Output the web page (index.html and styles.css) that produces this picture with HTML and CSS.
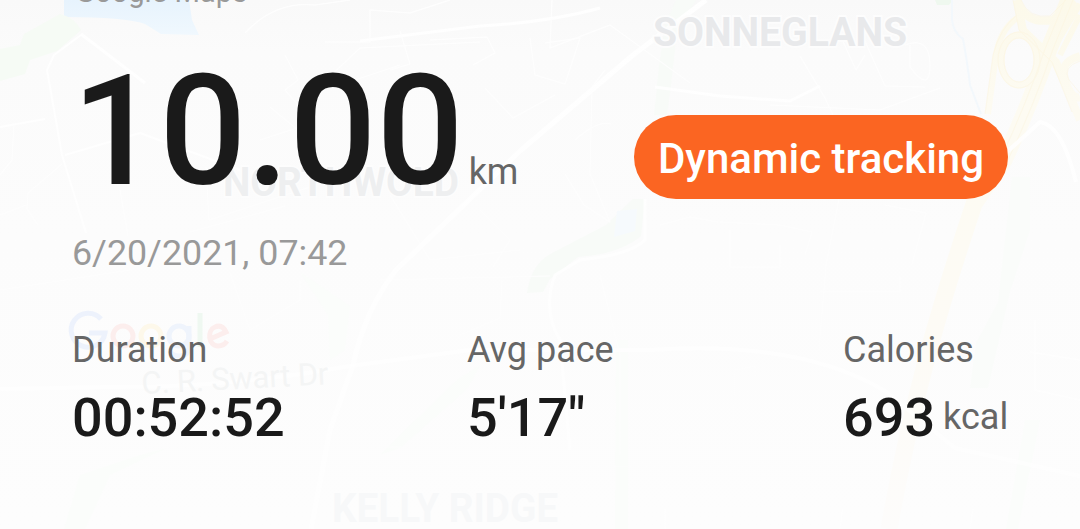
FILE: index.html
```html
<!DOCTYPE html>
<html lang="en">
<head>
<meta charset="utf-8">
<title>Workout</title>
<link rel="stylesheet" href="styles.css">
</head>
<body>
<div class="screen">
  <svg class="map" viewBox="0 0 1080 529" aria-hidden="true">
    <defs>
      <linearGradient id="fade" x1="0" y1="0" x2="0" y2="1">
        <stop offset="0" stop-color="#f9f9f9"/><stop offset=".1" stop-color="#fbfbfb"/>
        <stop offset=".45" stop-color="#fcfcfc"/><stop offset="1" stop-color="#fdfdfd"/>
      </linearGradient>
      <linearGradient id="water" x1="0" y1="0" x2="0" y2="1">
        <stop offset="0" stop-color="#e7f3fd"/><stop offset="1" stop-color="#f0f8fe"/>
      </linearGradient>
      <linearGradient id="motorway" gradientUnits="userSpaceOnUse" x1="0" y1="0" x2="0" y2="529">
        <stop offset="0" stop-color="#fcf9ea"/><stop offset=".2" stop-color="#fdfbf2"/><stop offset=".6" stop-color="#fdfbf5"/><stop offset="1" stop-color="#fdfcfb"/>
      </linearGradient>
      <linearGradient id="road" gradientUnits="userSpaceOnUse" x1="0" y1="0" x2="0" y2="529">
        <stop offset="0" stop-color="#fff" stop-opacity=".95"/><stop offset=".5" stop-color="#fff" stop-opacity=".8"/><stop offset="1" stop-color="#fff" stop-opacity=".5"/>
      </linearGradient>
    </defs>
    <rect width="1080" height="529" fill="url(#fade)"/>
    <path d="M64 0H189L192 20L199 35L161 34L145 24Q125 17 64 17Z" fill="url(#water)"/>
    <path d="M0 49L20 45L24 34L60 14Q74 17 81 30L57 51L30 60L25 74L0 81Z" fill="#f6fbf5"/>
    <g fill="#f8fbf8">
      <path d="M676 0H696L677 32L671 85L667 115H654L659 66L665 25Z"/>
      <path d="M633 199L645 199L641 236Q620 254 578 257L550 279L543 292L527 293Q531 263 554 252L606 225Z"/>
      <path d="M1012 177H1030V230L1010 292L988 388H970L976 343L998 302Z" fill="#fafcfa"/>
      <path d="M935 0H953L949 5H937Z" fill="#eff8ef"/>
    </g>
    <g fill="#fbfdfb">
      <path d="M300 272L350 306L345 350L330 360L328 315Z"/>
      <path d="M80 475L140 455L167 448L110 475L85 529H64Z"/>
      <path d="M457 380L480 365L468 388L400 448L380 455Z"/>
      <path d="M616 340H628V529H615ZM1025 420H1040L1018 529H1006Z"/>
    </g>
    <path d="M617 211L637 209L635 231L614 237Z" fill="#f6fafd"/>
    <path d="M952 0V20Q953 32 963 39Q967 60 970 85L981 114" fill="none" stroke="#f3f8fc" stroke-width="2"/>
    <g fill="none" stroke="url(#motorway)">
      <path d="M1069 0L1049 49Q1030 105 1004 160L974 204Q942 300 925 365Q905 440 889 529" stroke-width="17"/>
      <path d="M1017 0Q1025 25 1053 20L1074 0M1017 0L1023 30L1056 62L1080 120M1080 56Q1058 62 1065 81T1080 97" stroke-width="8"/>
      <ellipse cx="1019" cy="60" rx="18" ry="25" stroke-width="7"/>
      <path d="M1017 18Q1000 30 996 55L988 114" stroke-width="6"/>
      <path d="M1080 4L1050 54L1080 117M1080 15L1060 55" stroke-width="6"/>
    </g>
    <g fill="none" stroke="#fcf6df" stroke-width="1" opacity=".5">
      <path d="M1073 0L1053 49Q1034 105 1008 160M1065 0L1045 49Q1026 105 1000 160M1013 0L1019 30L1052 62L1072 112"/>
      <ellipse cx="1019" cy="60" rx="21" ry="28"/><ellipse cx="1019" cy="60" rx="15" ry="22"/>
      <path d="M1021 0Q1029 19 1050 16L1066 0M1080 61Q1062 67 1069 80L1080 93M1017 15Q1000 28 993 55L985 114"/>
    </g>
    <g fill="none" stroke="url(#road)" stroke-linejoin="round">
      <g stroke-width="4">
        <path d="M706 0L633 55L520 151L396 270Q365 310 353 365L330 430L311 529" stroke-width="5"/>
        <path d="M81 34L145 83" stroke-width="3"/>
        <path d="M360 41L480 26Q550 22 600 8M720 96L790 101L820 86M655 87L720 96" stroke-width="3"/>
        <path d="M0 389L110 387Q230 388 350 366L470 350L650 350Q800 340 885 391L955 448L1080 476"/>
        <path d="M645 199V240Q630 255 580 260L555 275Q542 310 560 340L570 450" stroke-width="3"/>
        <path d="M81 35L54 55L47 70L62 155L86 233M65 155L140 133L240 170M0 127L45 119" stroke-width="2"/>
        <path d="M975 181L1040 122Q1062 125 1076 182"/>
      </g>
      <g stroke-width="1.5" opacity=".85">
        <path d="M245 33Q275 1 315 5L350 0M325 42H370V10L410 13L450 0M552 0L550 48L610 25L690 83"/>
        <path d="M285 55L298 80L285 90L306 114M305 100L360 48L480 42M400 31L410 64L390 70M430 40L487 37L495 53L473 65"/>
        <path d="M270 107L310 140M260 140L303 126M206 167L209 220L350 174M190 232L285 206M120 190L128 236"/>
        <path d="M14 123L12 160L0 175M62 164L28 193L27 209L38 225M0 215L26 205M355 80L400 65M485 88L513 118L555 95M530 38L535 75L565 84L580 38L545 43"/>
        <path d="M575 140Q598 120 611 124M605 70L592 87L590 174L610 222L584 205L565 174M480 210L510 240L493 267M390 195L430 260L520 250"/>
        <path d="M800 56L825 98L833 115M840 35L856 70L865 55M860 30L885 86L925 87M905 45Q930 36 930 65T910 67V45M770 105L880 110L940 88"/>
        <path d="M839 199L826 265L819 350M720 222L780 225L812 232L805 255M730 230V267H780V245M885 205L926 213L912 264M660 225L690 217L718 222"/>
        <path d="M0 290L130 270M230 273L250 330L300 300L300 280M380 280L550 276M460 335L500 318L502 280M600 275L620 355V455M820 292H900V276"/>
        <path d="M480 380V440L590 438V390L545 405M646 378H700V430L650 440V380M735 370L755 366V430H733ZM800 370V440H850V420M1035 320V390L1080 400M1030 352L1080 360"/>
        <path d="M0 445L150 429L250 440L240 480M370 447H550L560 470L820 455M665 460V529M735 465V490M980 462L970 529M850 450L840 529M0 485L60 474"/>
      </g>
    </g>
    <g class="place">
      <g fill="#e8e9eb"><text x="653" y="46" textLength="254" lengthAdjust="spacingAndGlyphs">SONNEGLANS</text></g>
      <g fill="#eeeff0"><text x="223" y="196" textLength="236" lengthAdjust="spacingAndGlyphs">NORTHWOLD</text></g>
      <g fill="#f7f8f9"><text x="332" y="522" textLength="226" lengthAdjust="spacingAndGlyphs">KELLY RIDGE</text></g>
    </g>
    <text class="road" x="142" y="394" transform="rotate(-3 142 394)" textLength="187">C. R. Swart Dr</text>
    <g fill="none" stroke-width="5">
      <path d="M101 319A17 17 0 1 0 105 333H89" stroke="#edf2fc"/>
      <circle cx="123" cy="336" r="10" stroke="#fceeed"/>
      <circle cx="151" cy="336" r="10" stroke="#fdf8ea"/>
      <path d="M189 326V346Q189 356 179 356Q172 356 170 351" stroke="#eff4fc"/>
      <circle cx="179" cy="336" r="10" stroke="#eff4fc"/>
      <path d="M200 313V347" stroke="#eff8f1"/>
      <path d="M210 339L226 332Q222 324 215 327C207 330 208 346 218 346Q224 346 227 341" stroke="#fceeed"/>
    </g>
  </svg>
  <main class="summary">
    <div class="provider">Google Maps</div>
    <section class="headline">
      <div class="distance"><span class="distance-value">10.00</span><span class="unit">km</span></div>
      <button class="tracking">Dynamic tracking</button>
    </section>
    <div class="date">6/20/2021, 07:42</div>
    <section class="stats">
      <div class="stat"><div class="label">Duration</div><div class="value">00:52:52</div></div>
      <div class="stat"><div class="label">Avg pace</div><div class="value">5'17"</div></div>
      <div class="stat"><div class="label">Calories</div><div class="value">693<span class="unit kcal">kcal</span></div></div>
    </section>
  </main>
</div>
</body>
</html>
```

FILE: styles.css
```css
* { box-sizing: border-box; }
body { margin: 0; font-family: Roboto, "Liberation Sans", sans-serif; background: #fcfcfc; }
.screen { position: relative; width: 1080px; height: 529px; overflow: hidden; }
.map { position: absolute; inset: 0; width: 1080px; height: 529px; }
.place { font-size: 40px; font-weight: 700; }
.place text { stroke: #fdfdfd; stroke-width: 4px; paint-order: stroke; }
.road { font-size: 31px; fill: #f4f5f5; }
.summary { position: relative; padding: 0 72px; color: #1a1a1a; }
.provider { height: 40px; margin-top: -29px; padding-left: 3px; font-size: 29.2px; line-height: 42px; color: #999; }
.headline { display: flex; justify-content: space-between; align-items: flex-start; margin-top: 50px; height: 140px; }
.distance { display: flex; align-items: baseline; height: 140px; margin-top: 1px; line-height: 140px; }
.distance-value { font-size: 153.5px; font-weight: 500; }
.unit { font-size: 36px; font-weight: 400; color: #666; }
.distance .unit { margin-left: 5px; font-size: 36px; }
.tracking { height: 84px; width: 374px; margin-top: 54px; padding: 4px 0 0; border: 0; border-radius: 42px; background: #fb6522; color: #fff; font-family: inherit; font-size: 42px; font-weight: 500; line-height: 80px; white-space: nowrap; }
.date { margin-top: 32px; height: 40px; font-size: 35.8px; line-height: 40px; color: #999; }
.stats { display: grid; grid-template-columns: 395px 376px 165px; margin-top: 57px; }
.label { height: 40px; font-size: 36px; line-height: 40px; color: #666; }
.value { margin-top: 18px; height: 60px; font-size: 54px; font-weight: 500; line-height: 60px; white-space: nowrap; }
.kcal { margin-left: 8px; line-height: 1; vertical-align: 7px; }
```
